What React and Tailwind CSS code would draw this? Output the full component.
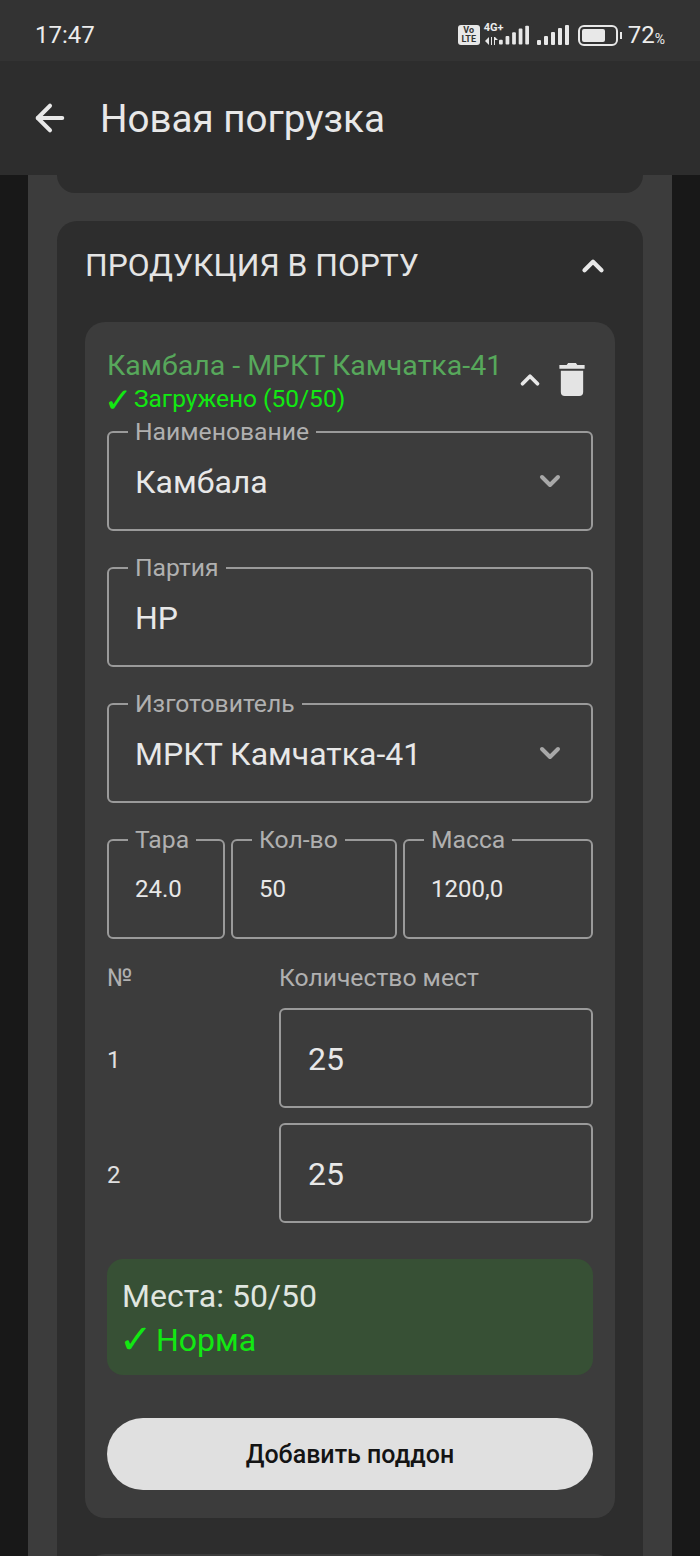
import { ArrowLeft, ChevronDown, ChevronUp } from 'lucide-react';

function Outlined({ label, value, icon, small, className = '' }) {
  return (
    <div className={`relative h-[100px] rounded-[6px] border-2 border-[#9a9a9a] flex items-center justify-between ${className}`}>
      <span className="absolute -top-[15px] left-[19px] bg-[#3c3c3c] px-[7px] text-[24.7px] leading-[28px] text-[#b0b0b0]">{label}</span>
      <span className={`pl-[26px] text-[#e8e8e8] ${small ? 'text-[24px]' : 'pt-[2px] text-[32px]'}`}>{value}</span>
      {icon && <ChevronDown size={32} strokeWidth={3} className="mr-[25px] text-[#a8a8a8]" />}
    </div>
  );
}

function SignalBars({ className }) {
  return (
    <svg width="32" height="20" viewBox="0 0 32 20" className={className} fill="#e8e8e8">
      <rect x="0" y="15" width="4" height="5" rx="1" />
      <rect x="7" y="11" width="4" height="9" rx="1" />
      <rect x="14" y="7" width="4" height="13" rx="1" />
      <rect x="21" y="3" width="4" height="17" rx="1" />
      <rect x="28" y="0" width="4" height="20" rx="1" />
    </svg>
  );
}

function StatusBar() {
  return (
    <div className="h-[61px] bg-[#333333] flex items-center justify-between pl-[35px] pr-[35px] pt-[9px] text-[#ececec]">
      <span className="text-[24px]">17:47</span>
      <div className="flex items-center">
        <div className="w-[22px] h-[20px] rounded-[3px] bg-[#e8e8e8] text-[#333333] text-[9px] leading-[9px] font-bold flex flex-col items-center justify-center">
          <span>Vo</span>
          <span>LTE</span>
        </div>
        <div className="relative w-[45px] h-[20px] ml-[4px]">
          <span className="absolute -top-[3px] left-0 text-[11px] leading-[12px] font-bold">4G+</span>
          <svg width="14" height="8" viewBox="0 0 14 8" className="absolute bottom-0 left-[1px]" fill="#e8e8e8">
            <path d="M4 0v8L0 4zM6 0v8h1V0zM9 0h1v8H9zM10 0l3 3h-3z" />
          </svg>
          <SignalBars className="absolute bottom-0 right-0 w-[30px]" />
        </div>
        <SignalBars className="ml-[8px]" />
        <div className="ml-[9px] w-[40px] h-[21px] rounded-[6px] border-2 border-[#e8e8e8] p-[2px]">
          <div className="h-full w-[72%] rounded-[2px] bg-[#e8e8e8]" />
        </div>
        <div className="ml-[2px] w-[2px] h-[7px] bg-[#e8e8e8]" />
        <span className="ml-[6px] text-[24px] leading-none">72</span>
        <span className="text-[14px] leading-none mt-[8px]">%</span>
      </div>
    </div>
  );
}

export default function App() {
  return (
    <div className="h-[1556px] w-[700px] overflow-hidden bg-[#181818] font-['Roboto',sans-serif]">
      <StatusBar />
      <header className="h-[114px] bg-[#2d2d2d] flex items-center pl-[29px] text-[#e8e8e8]">
        <ArrowLeft size={42} strokeWidth={2.3} />
        <h1 className="ml-[29px] pt-[2px] text-[38.6px] font-normal">Новая погрузка</h1>
      </header>

      <main className="mx-[28px] w-[644px] bg-[#3c3c3c] px-[29px] h-[1381px]">
        <div className="h-[18px] rounded-b-[20px] bg-[#2d2d2d]" />

        <section className="mt-[28px] rounded-[20px] bg-[#2d2d2d] px-[28px] pb-[36px]">
          <div className="h-[101px] pb-[11px] flex items-center justify-between">
            <h2 className="text-[31.8px] font-normal text-[#e4e4e4]">ПРОДУКЦИЯ В ПОРТУ</h2>
            <ChevronUp size={34} strokeWidth={3} className="mr-[5px] text-[#e8e8e8]" />
          </div>

          <div className="rounded-[20px] bg-[#3c3c3c] px-[22px] pt-[26px] pb-[28px]">
            <div className="flex items-start justify-between h-[83px]">
              <div className="pt-[1px]">
                <div className="text-[28.5px] leading-[33px] text-[#57a85b]">Камбала - МРКТ Камчатка-41</div>
                <div className="flex items-center h-[34px] pt-[1px] text-[24.5px] text-[#12e812]">
                  <span className="-ml-[3px] w-[30px] text-[34px] leading-none">✓</span>
                  <span>Загружено (50/50)</span>
                </div>
              </div>
              <div className="flex items-center mt-[15px] mr-[8px] text-[#e8e8e8]">
                <ChevronUp size={30} strokeWidth={3} />
                <svg width="26" height="33" viewBox="0 0 26 34" fill="#e4e4e4" className="ml-[14px]">
                  <path d="M9 0h8l1.500 2H26v4H0V2h7.500zM1.500 8h23v22a4 4 0 0 1-4 4h-15a4 4 0 0 1-4-4z" />
                </svg>
              </div>
            </div>

            <Outlined label="Наименование" value="Камбала" icon />
            <Outlined label="Партия" value="НР" className="mt-[36px]" />
            <Outlined label="Изготовитель" value="МРКТ Камчатка-41" icon className="mt-[36px]" />

            <div className="mt-[36px] flex gap-[6px]">
              <Outlined small label="Тара" value="24.0" className="w-[118px]" />
              <Outlined small label="Кол-во" value="50" className="w-[166px]" />
              <Outlined small label="Масса" value="1200,0" className="flex-1" />
            </div>

            <div className="mt-[24px] flex text-[24.7px] leading-[30px] text-[#b0b0b0]">
              <span className="w-[172px]">№</span>
              <span>Количество мест</span>
            </div>

            <div className="mt-[15px] flex items-center">
              <span className="w-[172px] pt-[3px] text-[24px] text-[#e0e0e0]">1</span>
              <div className="flex-1 h-[100px] rounded-[6px] border-2 border-[#9a9a9a] flex items-center pl-[27px] pt-[2px] text-[32px] text-[#e8e8e8]">25</div>
            </div>
            <div className="mt-[15px] flex items-center">
              <span className="w-[172px] pt-[3px] text-[24px] text-[#e0e0e0]">2</span>
              <div className="flex-1 h-[100px] rounded-[6px] border-2 border-[#9a9a9a] flex items-center pl-[27px] pt-[2px] text-[32px] text-[#e8e8e8]">25</div>
            </div>

            <div className="mt-[36px] h-[116px] rounded-[16px] bg-[#375035] px-[15px] pt-[15px]">
              <div className="text-[32px] leading-[44px] text-[#e0e6e0]">Места: 50/50</div>
              <div className="flex items-center h-[44px] text-[32px] text-[#12e812]">
                <span className="-ml-[3px] w-[37px] text-[40px] leading-none">✓</span>
                <span>Норма</span>
              </div>
            </div>

            <button className="mt-[43px] h-[72px] w-full rounded-full bg-[#e0e0e0] pt-[1px] text-[25px] font-medium text-[#141414]">
              Добавить поддон
            </button>
          </div>

          <div className="mt-[36px] h-[40px] rounded-t-[20px] bg-[#3c3c3c]" />
        </section>
      </main>
    </div>
  );
}
